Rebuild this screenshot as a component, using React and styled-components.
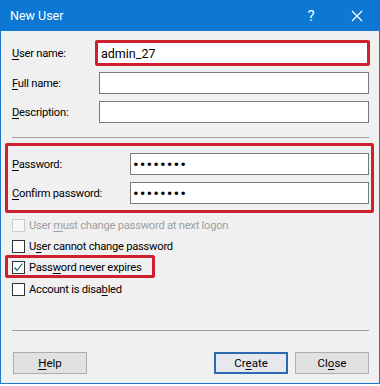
import React from 'react';
import styled, { createGlobalStyle } from 'styled-components';

const GlobalStyle = createGlobalStyle`
  html, body {
    margin: 0;
    padding: 0;
    background: #ffffff;
  }
  body {
    font-family: Roboto, "Noto Sans", sans-serif;
    font-size: 11px;
    color: #000;
  }
`;

const ui = 'Roboto, "Noto Sans", sans-serif';
const red = '#d0202e';

const Window = styled.div`
  width: 380px;
  height: 384px;
  box-sizing: border-box;
  border: 1px solid #1a78cf;
  border-top: none;
  background: #f0f0f0;
  display: flex;
  flex-direction: column;
`;

const TitleBar = styled.div`
  height: 31px;
  margin: 0 -1px;
  background: #0c78d3;
  color: #fff;
  display: flex;
  align-items: center;
  font-family: ${ui};
  font-size: 12.5px;
`;

const Title = styled.div`
  flex: 1;
  padding-left: 10px;
`;

const CaptionButton = styled.div`
  width: 46px;
  height: 31px;
  display: flex;
  align-items: center;
  justify-content: center;
  font-size: 15px;
`;

const Body = styled.div`
  flex: 1;
  padding: 9px 10px 0 11px;
  display: flex;
  flex-direction: column;
`;

const Field = styled.div`
  display: grid;
  grid-template-columns: ${p => p.$labelWidth || 87}px 1fr;
  align-items: center;
  height: ${p => p.$height || 22}px;
  margin-top: ${p => p.$top || 0}px;
`;

const Label = styled.label`
  font-family: ${ui};
  font-size: 11.2px;
  letter-spacing: -0.25px;
  white-space: nowrap;
`;

const Key = styled.span`
  text-decoration: underline;
  text-underline-offset: 2px;
  text-decoration-thickness: 1px;
`;

const Input = styled.input`
  box-sizing: border-box;
  height: ${p => (p.$highlight ? 26 : 22)}px;
  width: ${p => (p.$highlight ? 'calc(100% + 5px)' : '100%')};
  margin-left: ${p => (p.$highlight ? -4 : 0)}px;
  border: ${p => (p.$highlight ? `3px solid ${red}` : '1px solid #7a7a7a')};
  border-radius: ${p => (p.$highlight ? 2 : 0)}px;
  background: #fff;
  padding: 0 3px;
  font-family: ${ui};
  font-size: 12.5px;
  color: #000;
  outline: none;
`;

const PasswordInput = styled(Input)`
  font-size: 17px;
  letter-spacing: 1px;
  padding-left: 2px;
`;

const Separator = styled.div`
  height: 1px;
  background: #a0a0a0;
  margin-top: ${p => p.$top}px;
`;

const Highlight = styled.div`
  border: 3px solid ${red};
  border-radius: 2px;
  margin-top: ${p => p.$top || 0}px;
  margin-left: -7px;
  margin-right: ${p => p.$right ?? 0}px;
  width: ${p => (p.$width ? `${p.$width}px` : 'auto')};
  box-sizing: border-box;
  padding: ${p => p.$pad};
`;

const CheckRow = styled.div`
  display: flex;
  align-items: center;
  gap: 4px;
  height: 13px;
  margin-top: ${p => p.$top || 0}px;
  font-family: ${ui};
  font-size: 11.2px;
  letter-spacing: -0.25px;
  white-space: nowrap;
  color: ${p => (p.$disabled ? '#a0a0a0' : '#000')};
`;

const Box = styled.span`
  width: 13px;
  height: 13px;
  box-sizing: border-box;
  flex: none;
  border: 1px solid ${p => (p.$disabled ? '#cccccc' : '#333333')};
  background: ${p => (p.$disabled ? '#f7f7f7' : '#fff')};
  display: flex;
  align-items: center;
  justify-content: center;
`;

const Buttons = styled.div`
  display: flex;
  margin-top: 21px;
  padding-left: 1px;
`;

const Spacer = styled.div`
  flex: 1;
`;

const Button = styled.button`
  width: 74px;
  height: 22px;
  box-sizing: border-box;
  margin-left: ${p => p.$gap || 0}px;
  background: ${p => (p.$default ? '#e5e9ed' : '#e1e1e1')};
  border: ${p => (p.$default ? '2px solid #2a6bb0' : '1px solid #adadad')};
  font-family: ${ui};
  font-size: 11.5px;
  color: #000;
  padding: 0;
`;

function Check({ checked }) {
  return checked ? (
    <svg width="11" height="11" viewBox="0 0 11 11">
      <path d="M1.5 5.5 L4 8.5 L9.5 1.5" fill="none" stroke="#2d5f86" strokeWidth="1.2" />
    </svg>
  ) : null;
}

export default function App() {
  return (
    <>
      <GlobalStyle />
      <Window>
        <TitleBar>
          <Title>New User</Title>
          <CaptionButton>?</CaptionButton>
          <CaptionButton>
            <svg width="12" height="12" viewBox="0 0 12 12">
              <path d="M1 1 L11 11 M11 1 L1 11" stroke="#fff" strokeWidth="1.2" />
            </svg>
          </CaptionButton>
        </TitleBar>
        <Body>
          <Field $height={26}>
            <Label><Key>U</Key>ser name:</Label>
            <Input $highlight defaultValue="admin_27" />
          </Field>
          <Field $top={6}>
            <Label><Key>F</Key>ull name:</Label>
            <Input />
          </Field>
          <Field $top={7}>
            <Label><Key>D</Key>escription:</Label>
            <Input />
          </Field>
          <Separator $top={14} />
          <Highlight $top={5} $right={-5} $pad="7px 2px 6px 4px">
            <Field $labelWidth={118}>
              <Label><Key>P</Key>assword:</Label>
              <PasswordInput type="password" defaultValue="password" />
            </Field>
            <Field $labelWidth={118} $top={7}>
              <Label><Key>C</Key>onfirm password:</Label>
              <PasswordInput type="password" defaultValue="password" />
            </Field>
          </Highlight>
          <CheckRow $top={6} $disabled>
            <Box $disabled />
            <span>User <Key>m</Key>ust change password at next logon</span>
          </CheckRow>
          <CheckRow $top={8}>
            <Box />
            <span>U<Key>s</Key>er cannot change password</span>
          </CheckRow>
          <Highlight $top={2} $width={150} $pad="3px 0 1px 4px">
            <CheckRow>
              <Box><Check checked /></Box>
              <span>Pass<Key>w</Key>ord never expires</span>
            </CheckRow>
          </Highlight>
          <CheckRow $top={5}>
            <Box />
            <span>Account is disa<Key>b</Key>led</span>
          </CheckRow>
          <Separator $top={34} />
          <Buttons>
            <Button><Key>H</Key>elp</Button>
            <Spacer />
            <Button $default>Cr<Key>e</Key>ate</Button>
            <Button $gap={7}>Cl<Key>o</Key>se</Button>
          </Buttons>
        </Body>
      </Window>
    </>
  );
}
